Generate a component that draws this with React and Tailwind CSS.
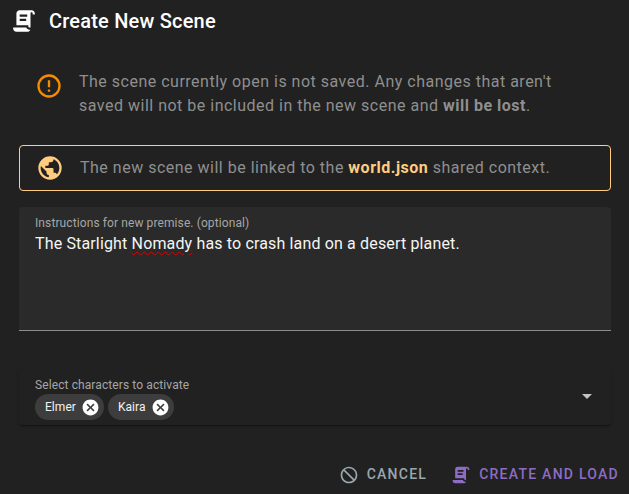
const SCRIPT = "M17.8,20C17.4,21.2 16.3,22 15,22H5C3.3,22 2,20.7 2,19V18H5L14.2,18C14.6,19.2 15.7,20 17,20H17.8M19,2C20.7,2 22,3.3 22,5V6H20V5C20,4.4 19.6,4 19,4C18.4,4 18,4.4 18,5V18H17C16.4,18 16,17.6 16,17V16H5V5C5,3.3 6.3,2 8,2H19M8,6V8H15V6H8M8,10V12H14V10H8Z";
const ALERT = "M11,15H13V17H11V15M11,7H13V13H11V7M12,2C6.47,2 2,6.5 2,12A10,10 0 0,0 12,22A10,10 0 0,0 22,12A10,10 0 0,0 12,2M12,20A8,8 0 0,1 4,12A8,8 0 0,1 12,4A8,8 0 0,1 20,12A8,8 0 0,1 12,20Z";
const EARTH = "M17.9,17.39C17.64,16.59 16.89,16 16,16H15V13A1,1 0 0,0 14,12H8V10H10A1,1 0 0,0 11,9V7H13A2,2 0 0,0 15,5V4.59C17.93,5.77 20,8.64 20,12C20,14.08 19.2,15.97 17.9,17.39M11,19.93C7.05,19.44 4,16.08 4,12C4,11.38 4.08,10.78 4.21,10.21L9,15V16A2,2 0 0,0 11,18M12,2A10,10 0 0,0 2,12A10,10 0 0,0 12,22A10,10 0 0,0 22,12A10,10 0 0,0 12,2Z";
const CANCEL = "M12 2C17.5 2 22 6.5 22 12S17.5 22 12 22 2 17.5 2 12 6.5 2 12 2M12 4C10.1 4 8.4 4.6 7.1 5.7L18.3 16.9C19.3 15.5 20 13.8 20 12C20 7.6 16.4 4 12 4M16.9 18.3L5.7 7.1C4.6 8.4 4 10.1 4 12C4 16.4 7.6 20 12 20C13.9 20 15.6 19.4 16.9 18.3Z";
const CLOSE = "M12,2C17.53,2 22,6.47 22,12C22,17.53 17.53,22 12,22C6.47,22 2,17.53 2,12C2,6.47 6.47,2 12,2M15.59,7L12,10.59L8.41,7L7,8.41L10.59,12L7,15.59L8.41,17L12,13.41L15.59,17L17,15.59L13.41,12L17,8.41L15.59,7Z";

function Icon({ d, className }) {
  return (
    <svg viewBox="0 0 24 24" className={className} fill="currentColor" aria-hidden="true">
      <path d={d} />
    </svg>
  );
}

function Chip({ label }) {
  return (
    <span className="flex h-[26px] items-center rounded-full bg-[#3d3d3d] pl-[10px] pr-[4px] text-[12px] font-normal tracking-[0.05px] text-[#f2f2f2]">
      {label}
      <Icon d={CLOSE} className="ml-[5px] h-[19px] w-[19px] text-white" />
    </span>
  );
}

export default function App() {
  return (
    <div className="h-[494px] w-[629px] overflow-hidden bg-[#212121] font-['Roboto',sans-serif]">
      <header className="flex h-[42px] items-center pl-[11px]">
        <Icon d={SCRIPT} className="h-[26px] w-[26px] text-white" />
        <h1 className="ml-[12px] text-[20px] font-medium tracking-[0.2px] text-white">Create New Scene</h1>
      </header>

      <div className="pl-[19px] pr-[18px]">
        <section className="mt-[26px] flex pl-[16px] pr-[16px]">
          <Icon d={ALERT} className="mt-[4px] h-[28px] w-[28px] shrink-0 text-[#f58b00]" />
          <p className="ml-[16px] mt-[2px] text-[16px] leading-[24px] tracking-[0.5px] text-[#8f8f8f]">
            The scene currently open is not saved. Any changes that aren't saved will not be included in the new scene and{" "}
            <strong className="font-bold">will be lost</strong>.
          </p>
        </section>

        <section className="mt-[27px] flex h-[46px] items-center rounded-[4px] border border-[#ffcc80] pl-[16px]">
          <Icon d={EARTH} className="h-[28px] w-[28px] shrink-0 text-[#ffcc80]" />
          <p className="ml-[16px] text-[16px] tracking-[0.5px] text-[#8f8f8f]">
            The new scene will be linked to the <strong className="font-bold text-[#ffcc80]">world.json</strong> shared context.
          </p>
        </section>

        <section className="mt-[16px] h-[124px] rounded-t-[4px] border-b border-[#8c8c8c] bg-[#2a2a2a] px-[16px] pt-[9px]">
          <label className="block text-[12px] leading-[14px] tracking-[0.1px] text-[#a6a6a6]">Instructions for new premise. (optional)</label>
          <p className="mt-[2px] text-[16px] leading-[24px] tracking-[0.15px] text-[#f5f5f5]">
            The Starlight{" "}
            <span className="underline decoration-[#e00000] decoration-wavy decoration-1 underline-offset-2">Nomady</span> has to crash land on a desert planet.
          </p>
        </section>

        <section className="relative mt-[38px] h-[56px] rounded-[4px] bg-[#212121] px-[16px] pt-[9px] shadow-[0_2px_2px_-1px_rgba(0,0,0,0.35),0_1px_3px_rgba(0,0,0,0.15)]">
          <label className="block text-[12px] leading-[14px] tracking-[0.1px] text-[#a6a6a6]">Select characters to activate</label>
          <div className="mt-[2px] flex gap-[4px]">
            <Chip label="Elmer" />
            <Chip label="Kaira" />
          </div>
          <span className="absolute right-[19px] top-[25px] h-0 w-0 border-x-[5px] border-t-[5px] border-x-transparent border-t-[#c4c4c4]" />
        </section>

        <footer className="mt-[39px] flex items-center justify-end">
          <button className="flex items-center text-[14px] font-medium tracking-[1.25px] text-[#9aa7ae]">
            <Icon d={CANCEL} className="mr-[8px] h-[20px] w-[20px]" />
            CANCEL
          </button>
          <button className="ml-[24px] mr-[-8px] flex items-center text-[14px] font-medium tracking-[1.25px] text-[#8e6cc4]">
            <Icon d={SCRIPT} className="mr-[8px] h-[20px] w-[20px]" />
            CREATE AND LOAD
          </button>
        </footer>
      </div>
    </div>
  );
}
